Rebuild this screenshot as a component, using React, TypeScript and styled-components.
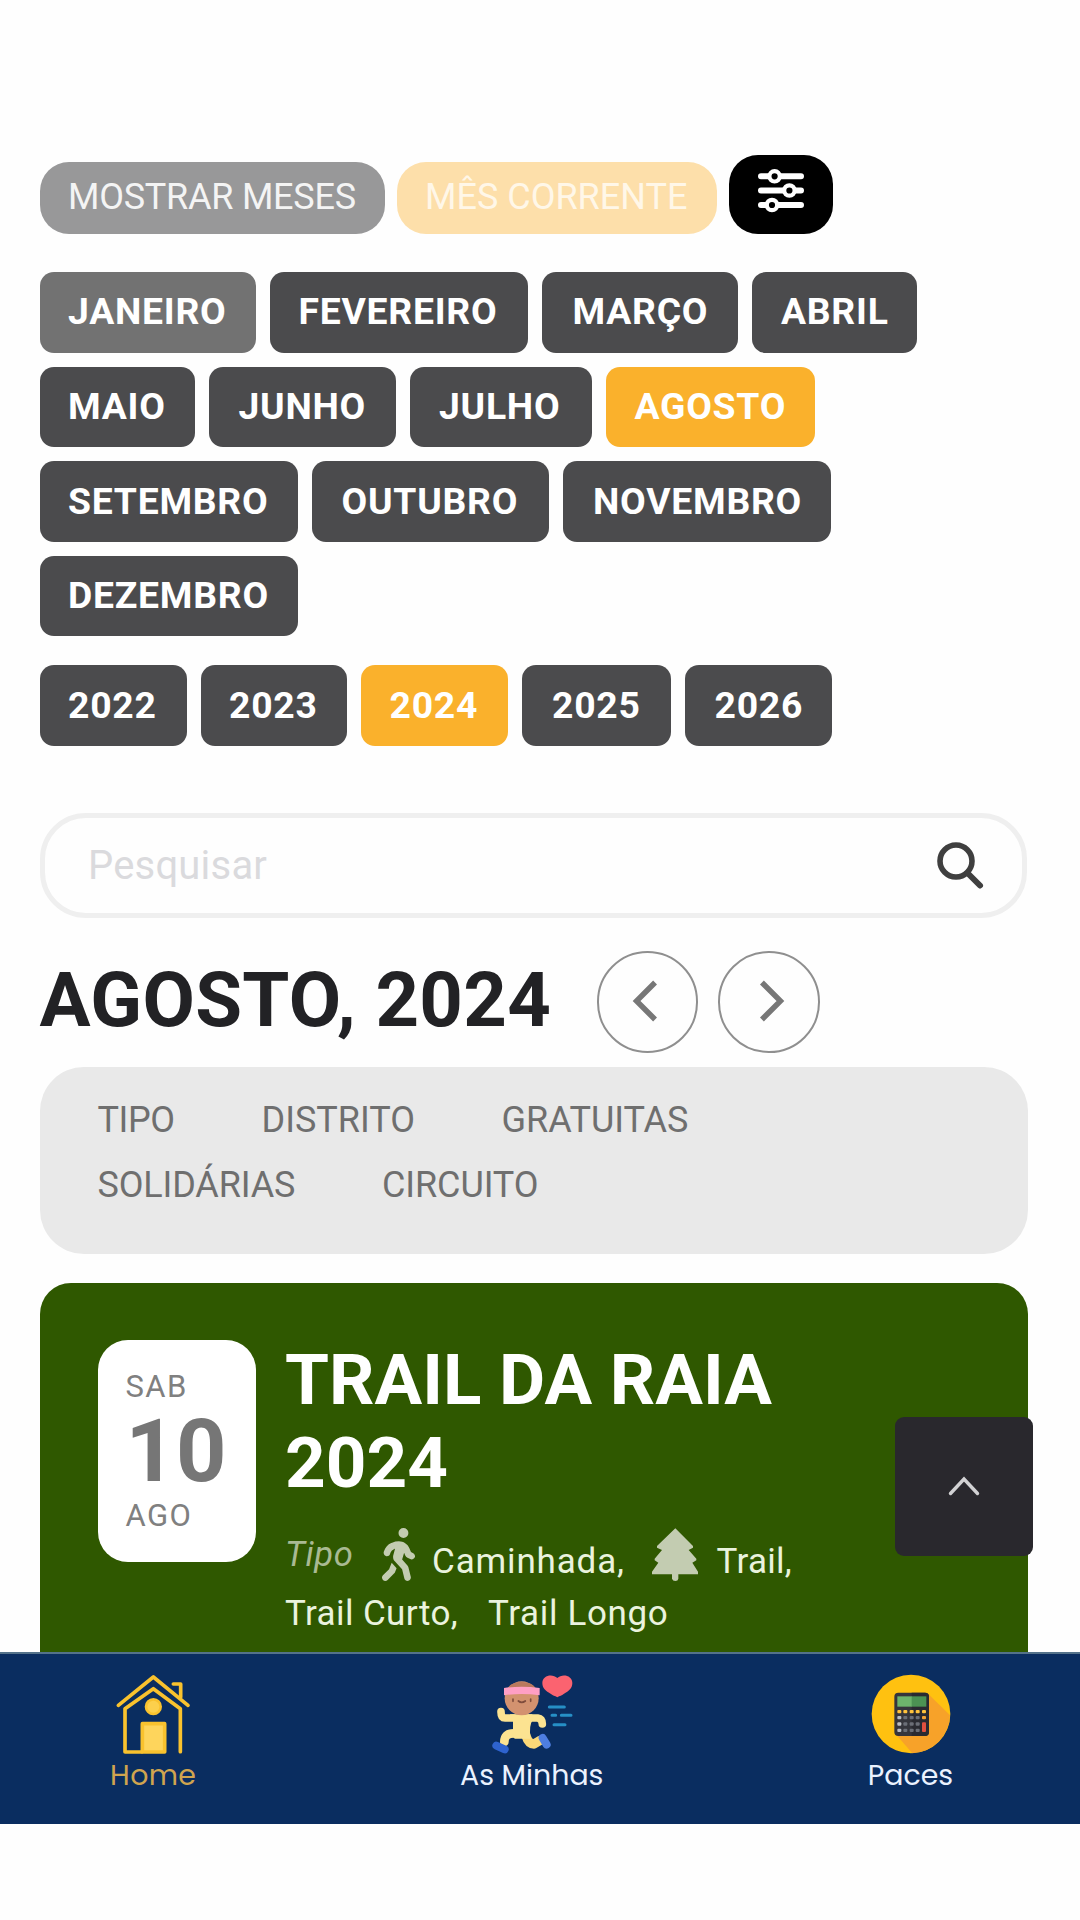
import React from 'react';
import styled, { createGlobalStyle } from 'styled-components';
import { FaPersonWalking } from 'react-icons/fa6';

const GlobalStyle = createGlobalStyle`
  *, *::before, *::after { box-sizing: border-box; }
  body { margin: 0; background: #fefefe; }
  button { border: 0; margin: 0; padding: 0; font: inherit; color: inherit; background: none; }
`;

const Screen = styled.div`
  position: relative;
  display: flex;
  flex-direction: column;
  width: 1080px;
  height: 1920px;
  overflow: hidden;
  background: #fefefe;
  font-family: Roboto, "Liberation Sans", sans-serif;
`;

const Content = styled.main`
  display: flex;
  flex-direction: column;
  height: 1652px;
  padding: 155px 52px 0 39.5px;
  overflow: hidden;
`;

const TopBar = styled.div`
  display: flex;
  align-items: flex-end;
  gap: 11.5px;
  height: 78.5px;
`;

const Pill = styled.button<{ $width: number; $bg: string; $color: string; $spacing?: number }>`
  width: ${p => p.$width}px;
  height: 72px;
  padding: 0 0 2px 28.5px;
  border-radius: 29px;
  background: ${p => p.$bg};
  color: ${p => p.$color};
  font-size: 36px;
  letter-spacing: ${p => p.$spacing ?? 0}px;
  text-align: left;
  white-space: nowrap;
`;

const FilterButton = styled.button`
  display: flex;
  justify-content: center;
  width: 104px;
  height: 78.5px;
  padding-top: 13px;
  border-radius: 29px;
  background: #000;
`;

const ChipRows = styled.div<{ $top: number }>`
  display: flex;
  flex-direction: column;
  gap: 14px;
  margin-top: ${p => p.$top}px;
`;

const ChipRow = styled.div`
  display: flex;
  gap: 14px;
`;

const Chip = styled.button<{ $width: number; $tone?: string; $lift?: number; $inset?: number }>`
  flex: none;
  width: ${p => p.$width}px;
  height: 80.5px;
  padding: 0 0 ${p => p.$lift ?? 0}px ${p => p.$inset ?? 28.5}px;
  border-radius: 14px;
  background: ${p => p.$tone ?? '#4b4b4d'};
  color: #fff;
  font-size: 37.3px;
  font-weight: 700;
  letter-spacing: 0.75px;
  text-align: left;
  white-space: nowrap;
`;

const SearchBox = styled.div`
  display: flex;
  align-items: center;
  justify-content: space-between;
  flex: none;
  width: 987.5px;
  height: 104.5px;
  margin-top: 67.5px;
  padding: 0 37px 0 43.5px;
  border: 5px solid #efefef;
  border-radius: 46px;
  color: #dadadd;
  font-size: 40px;
  letter-spacing: 0.2px;
`;

const MonthBar = styled.div`
  display: flex;
  align-items: center;
  flex: none;
  height: 102px;
  margin-top: 33.5px;
`;

const MonthTitle = styled.h1`
  width: 557px;
  margin: 0;
  padding-bottom: 4px;
  color: #222225;
  font-size: 76px;
  font-weight: 700;
  line-height: 90px;
  letter-spacing: 0.34px;
  white-space: nowrap;
`;

const RoundButton = styled.button`
  display: flex;
  align-items: center;
  justify-content: center;
  flex: none;
  width: 101.5px;
  height: 101.5px;
  margin-right: 20px;
  border: 2px solid #8f8f8f;
  border-radius: 50%;
`;

const FilterPanel = styled.div`
  flex: none;
  width: 988px;
  height: 187.5px;
  margin-top: 13.5px;
  padding: 21px 0 0 58px;
  border-radius: 44px;
  background: #e9e9e9;
`;

const FilterRow = styled.div`
  display: flex;
`;

const FilterItem = styled.span<{ $width?: number; $spacing?: number }>`
  width: ${p => (p.$width ? `${p.$width}px` : 'auto')};
  color: #6f6f6f;
  font-size: 36px;
  line-height: 65px;
  letter-spacing: ${p => p.$spacing ?? 0}px;
  white-space: nowrap;
`;

const EventCard = styled.article`
  display: flex;
  align-items: flex-start;
  flex: none;
  width: 988px;
  height: 420px;
  margin-top: 28.5px;
  padding: 57.5px 0 0 58px;
  border-radius: 31px;
  background: #2f5800;
`;

const DateBox = styled.div`
  display: flex;
  flex-direction: column;
  flex: none;
  width: 158px;
  height: 222px;
  padding: 28.5px 0 0 28px;
  border-radius: 30px;
  background: #fff;
  color: #767676;
`;

const DateWord = styled.span<{ $height: number }>`
  font-size: 31px;
  line-height: ${p => p.$height}px;
  letter-spacing: 1.4px;
  color: #808080;
`;

const DateDay = styled.span`
  font-size: 88px;
  font-weight: 700;
  line-height: 91px;
`;

const EventBody = styled.div`
  margin: -2px 0 0 29.5px;
`;

const EventTitle = styled.h2`
  width: 560px;
  margin: 0;
  color: #fff;
  font-size: 71px;
  font-weight: 700;
  line-height: 83.4px;
`;

const TagRow = styled.div<{ $top: number }>`
  display: flex;
  align-items: center;
  height: 53px;
  margin-top: ${p => p.$top}px;
  color: #eaf3de;
  font-size: 35px;
`;

const TagLabel = styled.em`
  width: 97px;
  color: #a9ba93;
  font-size: 34.5px;
  letter-spacing: 0.6px;
`;

const TagText = styled.span<{ $width?: number; $drop?: number; $spacing: number }>`
  width: ${p => (p.$width ? `${p.$width}px` : 'auto')};
  padding-top: ${p => p.$drop ?? 0}px;
  letter-spacing: ${p => p.$spacing}px;
  white-space: nowrap;
`;

const TagIcon = styled.span<{ $gap: number }>`
  display: flex;
  margin-right: ${p => p.$gap}px;
  color: #c3ccb1;
`;

const ScrollTop = styled.button`
  position: absolute;
  top: 1416.5px;
  left: 894.5px;
  display: flex;
  align-items: center;
  justify-content: center;
  width: 138.5px;
  height: 139px;
  border-radius: 9px;
  background: #29282d;
`;

const BottomNav = styled.nav`
  display: flex;
  flex: none;
  height: 172px;
  background: #0a2d60;
  border-top: 2px solid #54728a;
`;

const NavItem = styled.a<{ $width: number; $color: string; $spacing?: number }>`
  display: flex;
  flex-direction: column;
  align-items: center;
  width: ${p => p.$width}px;
  padding-top: 20px;
  color: ${p => p.$color};
  font-family: Poppins, Inter, sans-serif;
  font-size: 28.4px;
  line-height: 34px;
  letter-spacing: ${p => p.$spacing ?? 0}px;
  svg { display: block; margin-bottom: 4px; }
`;

const SlidersIcon = () => (
  <svg width="48" height="46" viewBox="0 0 48 46" fill="#000" stroke="#fff">
    <g strokeWidth="6" strokeLinecap="round">
      <path d="M4 8.3H44M4 22.5H44M4 37H44" />
    </g>
    <g strokeWidth="4.2">
      <circle cx="17.6" cy="8.3" r="5.2" />
      <circle cx="32.4" cy="22.5" r="5.2" />
      <circle cx="15" cy="37" r="5.2" />
    </g>
  </svg>
);

const SearchIcon = () => (
  <svg width="50" height="50" viewBox="0 0 50 50" fill="none" stroke="#3f3f3f">
    <circle cx="21" cy="21" r="16" strokeWidth="5.6" />
    <path d="M32.5 33 45 45.5" strokeWidth="6" strokeLinecap="round" />
  </svg>
);

const Chevron = ({ right }: { right?: boolean }) => (
  <svg width="100" height="98" viewBox="0 0 100 98" fill="none" stroke="#777" strokeWidth="5.6">
    <path d={right ? 'M43 29 62 48 43 67' : 'M57.5 29 38.5 48 57.5 67'} />
  </svg>
);

const TreeIcon = () => (
  <svg width="46" height="53" viewBox="1117 52 138 159" fill="currentColor">
    <path d="M1187 53 1240 106V111L1227 118 1250 144V149L1238 156 1255 183V191H1196V204Q1195 211 1187 211T1177 204V191H1117V183L1136 156 1125 149V144L1147 118 1132 111V106Z" />
  </svg>
);

const HomeIcon = () => (
  <svg width="76.7" height="80" viewBox="75 42 230 240" fill="none" stroke="#f9c22e" strokeWidth="11" strokeLinecap="round" strokeLinejoin="round">
    <path d="M85 136 190 51 294 136" />
    <path d="M271 275V146L190 86 105 146V276H155" />
    <path d="M250 72H272V112" />
    <circle cx="190" cy="140" r="22" fill="#fcd04c" strokeWidth="8" />
    <rect x="157" y="191" width="67" height="85" fill="#fed55c" />
  </svg>
);

const RunnerIcon = () => (
  <svg width="82" height="80" viewBox="150 42 246 240" fill="none" strokeLinecap="round" strokeLinejoin="round">
    <path d="M349 112C341 107 336 107 330 102C314 93 304 84 304 69C304 45 335 40 349 54C363 40 394 45 394 69C394 84 384 93 368 102C362 107 357 107 349 112Z" fill="#fb6370" />
    <g stroke="#268fc6" strokeWidth="9">
      <path d="M325 141H370M333 166H344M361 166H390M339 194H372" />
    </g>
    <path d="M218 174H192Q180 174 180 155" stroke="#fce391" strokeWidth="23" />
    <path d="M262 174H290Q304 176 304 192" stroke="#fce391" strokeWidth="23" />
    <path d="M218 220Q190 220 190 246" stroke="#fce391" strokeWidth="26" />
    <path d="M254 224Q262 252 279 252L298 241" stroke="#fbd878" strokeWidth="28" />
    <path d="M207 163H274V182Q264 194 268 236H222Q214 236 216 214V184Z" fill="#fce391" />
    <circle cx="242" cy="115" r="51" fill="#d3926f" />
    <path d="M200 84Q212 66 242 66T284 84Z" fill="#b8795d" />
    <path d="M189 84Q242 76 296 84V106Q242 98 189 106Z" fill="#ff9fc4" />
    <g stroke="#7f4c3c" strokeWidth="5">
      <path d="M216 117V124M269 117V124M232 123Q242 131 253 123" />
    </g>
    <path d="M166 257 191 268" stroke="#2e63cf" strokeWidth="24" />
    <path d="M305 234 317 254" stroke="#4e7ee0" strokeWidth="24" />
  </svg>
);

const KEY_COLUMNS = [147, 165, 184, 202, 221];
const KEY_ROWS = [155, 173, 192, 211];

const keyColor = (row: number, col: number) => {
  if (row === 0) return '#ffc23c';
  if (col === 4) return row === 1 ? '#f3a234' : '#e2503f';
  return col === 0 ? '#b9bcc2' : '#6b6e77';
};

const CalculatorIcon = () => (
  <svg width="80" height="80" viewBox="62 42 240 240">
    <circle cx="182" cy="162" r="118" fill="#ffc110" />
    <path d="M234 102 299 166A118 118 0 0 1 186 280L138 224Z" fill="#f7a229" />
    <rect x="132" y="98" width="104" height="130" rx="12" fill="#35353c" />
    <path d="M184 98H224Q236 98 236 110V216Q236 228 224 228H184Z" fill="#2a2a31" />
    <rect x="141" y="109" width="44" height="31" fill="#6db46c" />
    <rect x="184" y="109" width="44" height="31" fill="#4c9253" />
    {KEY_ROWS.map((y, row) =>
      KEY_COLUMNS.map((x, col) =>
        row === 3 && col === 4 ? null : (
          <rect key={`${row}-${col}`} x={x - 6} y={y - 5} width="12" height={col === 4 && row === 2 ? 29 : 10} rx="3" fill={keyColor(row, col)} />
        )
      )
    )}
  </svg>
);

type ChipData = { label: string; width: number; tone?: string; inset?: number };

const AMBER = '#fab12c';

const MONTHS: ChipData[][] = [
  [
    { label: 'JANEIRO', width: 216.5, tone: '#727272' },
    { label: 'FEVEREIRO', width: 257.5 },
    { label: 'MARÇO', width: 196, inset: 31 },
    { label: 'ABRIL', width: 165, inset: 29.5 },
  ],
  [
    { label: 'MAIO', width: 155.5 },
    { label: 'JUNHO', width: 186.5, inset: 29.5 },
    { label: 'JULHO', width: 182.5, inset: 29.5 },
    { label: 'AGOSTO', width: 209 },
  ],
  [
    { label: 'SETEMBRO', width: 258.5 },
    { label: 'OUTUBRO', width: 236.5, inset: 29.5 },
    { label: 'NOVEMBRO', width: 268, inset: 30.5 },
  ],
  [{ label: 'DEZEMBRO', width: 258.5 }],
];

const YEARS: ChipData[] = [
  { label: '2022', width: 147 },
  { label: '2023', width: 146.5 },
  { label: '2024', width: 147 },
  { label: '2025', width: 148.5, inset: 30 },
  { label: '2026', width: 147, inset: 30 },
];

const SELECTED = ['AGOSTO', '2024'];

const Chips = ({ items, lift }: { items: ChipData[]; lift?: number }) => (
  <ChipRow>
    {items.map(item => (
      <Chip
        key={item.label}
        $width={item.width}
        $tone={SELECTED.includes(item.label) ? AMBER : item.tone}
        $lift={lift}
        $inset={item.inset}
      >
        {item.label}
      </Chip>
    ))}
  </ChipRow>
);

export default function App() {
  return (
    <Screen>
      <GlobalStyle />
      <Content>
        <TopBar>
          <Pill $width={345.5} $bg="#989899" $color="#f4f4f4" $spacing={-0.24}>MOSTRAR MESES</Pill>
          <Pill $width={320.5} $bg="#fddfaa" $color="#fff7e8">MÊS CORRENTE</Pill>
          <FilterButton aria-label="Filtros"><SlidersIcon /></FilterButton>
        </TopBar>
        <ChipRows $top={38.5}>
          {MONTHS.map((row, i) => <Chips key={i} items={row} lift={i === 0 ? 2 : 1} />)}
        </ChipRows>
        <ChipRows $top={29}>
          <Chips items={YEARS} lift={1} />
        </ChipRows>
        <SearchBox>
          Pesquisar
          <SearchIcon />
        </SearchBox>
        <MonthBar>
          <MonthTitle>AGOSTO, 2024</MonthTitle>
          <RoundButton aria-label="Mês anterior"><Chevron /></RoundButton>
          <RoundButton aria-label="Mês seguinte"><Chevron right /></RoundButton>
        </MonthBar>
        <FilterPanel>
          <FilterRow>
            <FilterItem $width={164} $spacing={-0.4}>TIPO</FilterItem>
            <FilterItem $width={240}>DISTRITO</FilterItem>
            <FilterItem>GRATUITAS</FilterItem>
          </FilterRow>
          <FilterRow>
            <FilterItem $width={284.5} $spacing={-0.15}>SOLIDÁRIAS</FilterItem>
            <FilterItem $spacing={-0.1}>CIRCUITO</FilterItem>
          </FilterRow>
        </FilterPanel>
        <EventCard>
          <DateBox>
            <DateWord $height={36}>SAB</DateWord>
            <DateDay>10</DateDay>
            <DateWord $height={40}>AGO</DateWord>
          </DateBox>
          <EventBody>
            <EventTitle>TRAIL DA RAIA 2024</EventTitle>
            <TagRow $top={23}>
              <TagLabel>Tipo</TagLabel>
              <TagIcon $gap={17}><FaPersonWalking style={{ width: 33, height: 53 }} /></TagIcon>
              <TagText $width={220} $drop={15} $spacing={0.85}>Caminhada,</TagText>
              <TagIcon $gap={18.5}><TreeIcon /></TagIcon>
              <TagText $drop={15} $spacing={0.3}>Trail,</TagText>
            </TagRow>
            <TagRow $top={6.5}>
              <TagText $width={203} $spacing={0.4}>Trail Curto,</TagText>
              <TagText $spacing={0.65}>Trail Longo</TagText>
            </TagRow>
          </EventBody>
        </EventCard>
      </Content>
      <BottomNav>
        <NavItem $width={306.5} $color="#d0a44f" $spacing={0.4}><HomeIcon />Home</NavItem>
        <NavItem $width={450.5} $color="#eaf2ff"><RunnerIcon />As Minhas</NavItem>
        <NavItem $width={307} $color="#eaf2ff"><CalculatorIcon />Paces</NavItem>
      </BottomNav>
      <ScrollTop aria-label="Voltar ao topo">
        <svg width="34" height="22" viewBox="0 0 34 22" fill="none" stroke="#d2d2d4" strokeWidth="3.4" strokeLinecap="round">
          <path d="M3.5 18.5 17 4 30.5 18.5" />
        </svg>
      </ScrollTop>
    </Screen>
  );
}
